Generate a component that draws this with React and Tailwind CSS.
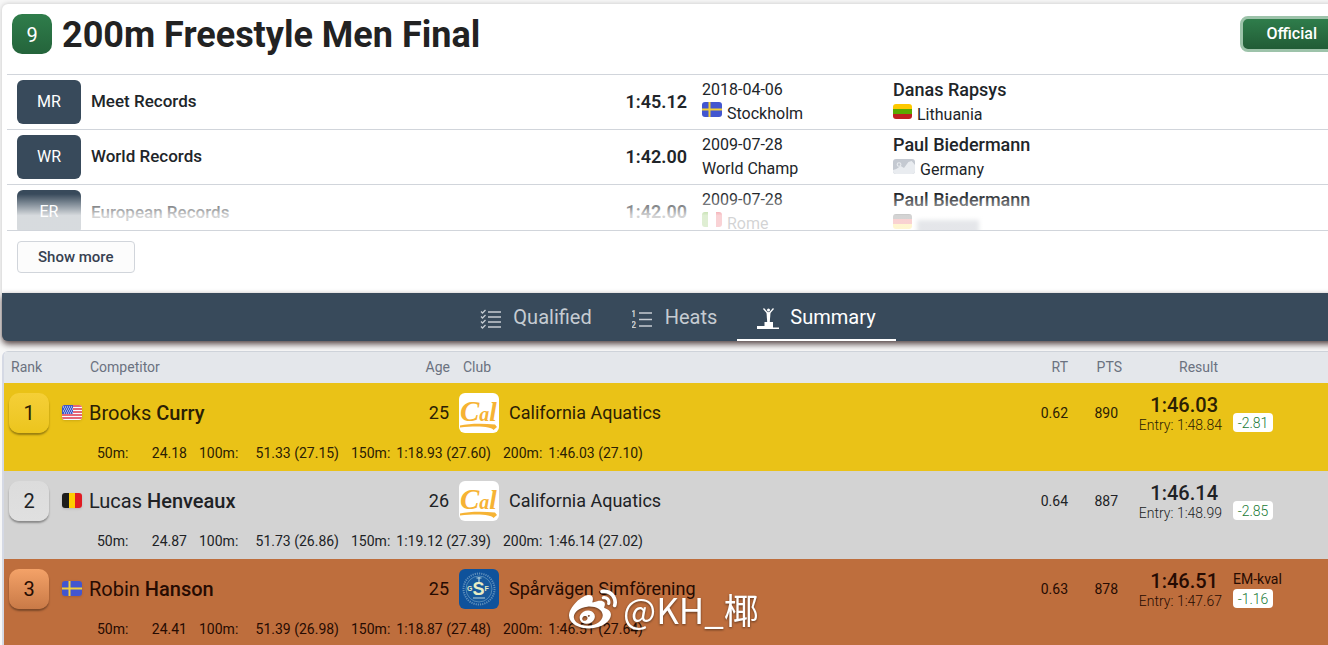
import { SiSinaweibo } from "react-icons/si"
import clsx from "clsx"

const records = [
  { code: "MR", name: "Meet Records", time: "1:45.12", date: "2018-04-06", flag: "se", place: "Stockholm", holder: "Danas Rapsys", countryFlag: "lt", country: "Lithuania" },
  { code: "WR", name: "World Records", time: "1:42.00", date: "2009-07-28", place: "World Champ", holder: "Paul Biedermann", countryFlag: "none", country: "Germany" },
  { code: "ER", name: "European Records", time: "1:42.00", date: "2009-07-28", flag: "it", place: "Rome", holder: "Paul Biedermann", countryFlag: "de", country: "" },
]

const results = [
  {
    rank: 1, flag: "us", first: "Brooks", last: "Curry", age: 25, logo: "cal", club: "California Aquatics",
    rt: "0.62", pts: 890, time: "1:46.03", entry: "1:48.84", diff: "-2.81",
    splits: [["50m:", "24.18"], ["100m:", "51.33 (27.15)"], ["150m:", "1:18.93 (27.60)"], ["200m:", "1:46.03 (27.10)"]],
    row: "bg-[#eac217] text-[#2b2004]",
    badge: "from-[#f5cf37] to-[#ecc51c]",
  },
  {
    rank: 2, flag: "be", first: "Lucas", last: "Henveaux", age: 26, logo: "cal", club: "California Aquatics",
    rt: "0.64", pts: 887, time: "1:46.14", entry: "1:48.99", diff: "-2.85",
    splits: [["50m:", "24.87"], ["100m:", "51.73 (26.86)"], ["150m:", "1:19.12 (27.39)"], ["200m:", "1:46.14 (27.02)"]],
    row: "bg-[#d3d3d3] text-[#202225]",
    badge: "from-[#dcdcdc] to-[#e0e0e0]",
  },
  {
    rank: 3, flag: "se", first: "Robin", last: "Hanson", age: 25, logo: "ssf", club: "Spårvägen Simförening",
    rt: "0.63", pts: 878, time: "1:46.51", entry: "1:47.67", diff: "-1.16", note: "EM-kval",
    splits: [["50m:", "24.41"], ["100m:", "51.39 (26.98)"], ["150m:", "1:18.87 (27.48)"], ["200m:", "1:46.51 (27.64)"]],
    row: "bg-[#be6e3d] text-[#260b02]",
    badge: "from-[#f4a268] to-[#c97a47]",
  },
]

function Flag({ code, className }) {
  return (
    <svg viewBox="0 0 20 15" preserveAspectRatio="none" className={clsx("h-[15px] shrink-0 rounded-[3px]", className)} aria-hidden="true">
      {code === "se" && (
        <>
          <rect width="20" height="15" fill="#4256d0" />
          <path d="M7.5 0v15M0 7.5h20" stroke="#f2cf3a" strokeWidth="2" />
        </>
      )}
      {code === "lt" && (
        <>
          <rect width="20" height="5" fill="#fdc800" />
          <rect y="5" width="20" height="5" fill="#5aaa00" />
          <rect y="10" width="20" height="5" fill="#bf2020" />
        </>
      )}
      {code === "it" && (
        <>
          <rect width="20" height="15" fill="#fff" />
          <rect width="6" height="15" fill="#5eaa22" />
          <rect x="14" width="6" height="15" fill="#e11e2e" />
        </>
      )}
      {code === "de" && (
        <>
          <rect width="20" height="5" fill="#272727" />
          <rect y="5" width="20" height="5" fill="#e31d1c" />
          <rect y="10" width="20" height="5" fill="#ffd018" />
        </>
      )}
      {code === "be" && (
        <>
          <rect width="7" height="15" fill="#1d1d1b" />
          <rect x="7" width="6" height="15" fill="#fecc00" />
          <rect x="13" width="7" height="15" fill="#e11b22" />
        </>
      )}
      {code === "us" && (
        <>
          <rect width="20" height="15" fill="#f7fcff" />
          <path d="M0 1h20M0 4h20M0 7h20M0 10h20M0 13h20" stroke="#e0364a" strokeWidth="1.5" />
          <rect width="11" height="9" fill="#3d58c8" />
          <path d="M1 2h10M2 4h9M1 6h10M2 8h9" stroke="#f7fcff" strokeWidth="1" strokeDasharray="1 1" />
        </>
      )}
      {code === "none" && (
        <>
          <rect width="20" height="15" fill="#c4c9d1" />
          <circle cx="5.5" cy="5.5" r="1.7" fill="none" stroke="#e8ebef" />
          <path d="M0 11l3-1 4-3 3 2 4-6 3-1 3 4v9H0z" fill="#e9ecf0" />
        </>
      )}
    </svg>
  )
}

function ClubLogo({ name }) {
  if (name === "cal") {
    return (
      <svg viewBox="0 0 40 40" className="size-10 shrink-0 rounded-md bg-white" aria-hidden="true">
        <text x="1" y="28" fontSize="29" fill="#f6b334" fontFamily="Liberation Serif, serif" fontStyle="italic" fontWeight="bold">
          C<tspan fontSize="20">a</tspan><tspan fontSize="27">l</tspan>
        </text>
        <path d="M1 32.500C10 30.500 24 30.500 36 31.500L38 34L34.500 37C33 33.500 18 32.500 1 34.500z" fill="#f6b334" />
      </svg>
    )
  }
  return (
    <svg viewBox="0 0 40 40" className="size-10 shrink-0 rounded-md bg-[#0f529b]" aria-hidden="true">
      <circle cx="20" cy="20" r="15.500" fill="none" stroke="#5f8fbb" strokeWidth="2" strokeDasharray="1.200 1" />
      <circle cx="20" cy="20" r="13" fill="#17599c" stroke="#6f9fc4" strokeWidth="0.700" />
      <path d="M20 8v6M17.500 9h5M14 29h12" stroke="#b8d2da" strokeWidth="1.200" />
      <text x="8" y="24" fill="#e9edc4" fontSize="7" fontFamily="Liberation Sans, sans-serif" fontWeight="bold">
        <tspan dy="-2">G</tspan><tspan dy="4" fontSize="18">S</tspan><tspan dy="-4">F</tspan>
      </text>
    </svg>
  )
}

function QualifiedIcon() {
  return (
    <svg viewBox="0 0 22 22" className="size-[22px]" fill="none" stroke="currentColor" aria-hidden="true">
      <path d="M8 4h13M8 9h13M8 14h13M8 19h13" strokeWidth="1.400" />
      <path d="M1 3.500l1.500 1.500 3-3M1 8.500l1.500 1.500 3-3M1 13.500l1.500 1.500 3-3M1 18.500l1.500 1.500 3-3" strokeWidth="1.300" />
    </svg>
  )
}

function HeatsIcon() {
  return (
    <svg viewBox="0 0 22 22" className="size-[22px]" fill="currentColor" aria-hidden="true">
      <path d="M7 5h13M7 11.500h13M7 18h13" stroke="currentColor" strokeWidth="1.400" />
      <text x="-1" y="9" fontSize="9" fontWeight="bold">1</text>
      <text x="-1" y="20" fontSize="9" fontWeight="bold">2</text>
    </svg>
  )
}

function PodiumIcon() {
  return (
    <svg viewBox="0 0 22 24" className="h-6 w-[22px]" fill="currentColor" aria-hidden="true">
      <circle cx="11.500" cy="3" r="1.500" />
      <path d="M6.500 1.500l4 4.500h2L16.500 1.500" fill="none" stroke="currentColor" strokeWidth="1.300" />
      <path d="M9.500 5.500h4L12.800 15h-2.600z" />
      <path d="M7.500 15H16v5.500h6V22H0v-3h7.500z" />
    </svg>
  )
}

const tabs = [
  { label: "Qualified", Icon: QualifiedIcon },
  { label: "Heats", Icon: HeatsIcon },
  { label: "Summary", Icon: PodiumIcon, active: true },
]

function EventHeader() {
  return (
    <header className="flex h-[70px] items-start justify-between px-[10px] pt-[10px]">
      <div className="flex items-start gap-[10px]">
        <span className="flex size-10 items-center justify-center rounded-[10px] bg-linear-to-b from-[#2f7d4b] to-[#24643b] pt-[2px] text-xl text-white">9</span>
        <h1 className="text-4xl leading-[42px] font-bold text-[#222]">200m Freestyle Men Final</h1>
      </div>
      <button className="mt-[2px] h-9 rounded-lg border-[3px] border-[#9dc3aa] bg-linear-to-b from-[#2f7d4b] to-[#215c36] px-6 font-medium text-white">
        Official
      </button>
    </header>
  )
}

function Records() {
  return (
    <section className="px-[5px]">
      <div className="relative h-[157px] overflow-hidden border-b border-[#d1d5db]">
        <table className="w-full table-fixed">
          <colgroup>
            <col className="w-[84px]" />
            <col />
            <col className="w-[120px]" />
            <col className="w-[191px]" />
            <col className="w-[461px]" />
          </colgroup>
          <tbody>
            {records.map((r) => (
              <tr key={r.code} className="h-[55px] border-t border-[#d1d5db]">
                <td className="pl-[10px]">
                  <span className="flex h-11 w-16 items-center justify-center rounded-md bg-[#384a5b] text-white">{r.code}</span>
                </td>
                <td className="text-[17px] font-medium">{r.name}</td>
                <td className="pr-[10px] text-right text-lg font-semibold">{r.time}</td>
                <td className="pl-[5px]">
                  <div>{r.date}</div>
                  <div className="flex items-start gap-[5px]">
                    {r.flag && <Flag code={r.flag} className="w-5" />}
                    {r.place}
                  </div>
                </td>
                <td className="pt-[2px] pl-[5px] align-top">
                  <div className="text-lg leading-[25px] font-medium">{r.holder}</div>
                  <div className="flex items-start gap-[5px] leading-[26px]">
                    <Flag code={r.countryFlag} className={clsx("mt-[2px]", r.countryFlag === "none" ? "w-[22px]" : "w-[19px]")} />
                    {r.country || <span className="mt-2 h-4 w-[62px] bg-[#7b8494] blur-[2px]" />}
                  </div>
                </td>
              </tr>
            ))}
          </tbody>
        </table>
        <div className="pointer-events-none absolute inset-x-0 bottom-0 h-9 bg-linear-to-b from-white/0 to-white/80 to-60%" />
      </div>
      <div className="flex h-[62px] items-start px-[10px] pt-[10px]">
        <button className="h-8 rounded border border-[#d1d5db] bg-[#fcfcfc] px-5 text-[15px] font-medium text-[#374151]">
          Show more
        </button>
      </div>
    </section>
  )
}

function Tabs() {
  return (
    <nav className="relative flex h-12 justify-center rounded-b-md bg-[#384a5b] shadow-[0_3px_6px_rgba(40,20,20,0.8)]">
      {tabs.map(({ label, Icon, active }) => (
        <button
          key={label}
          className={clsx(
            "flex items-center gap-[11px] border-b-2 px-5 pt-[2px] text-xl",
            active ? "border-white text-white" : "border-transparent text-[#c6ccd2]"
          )}
        >
          <span className="pt-1">
            <Icon />
          </span>
          {label}
        </button>
      ))}
    </nav>
  )
}

function ResultRow({ r }) {
  return (
    <>
      <tr className={clsx("h-[60px]", r.row)}>
        <td className="pl-[5px]">
          <span className={clsx("flex size-10 items-center justify-center rounded-[10px] bg-linear-to-b text-xl shadow-[0_2px_2px_rgba(0,0,0,0.35)]", r.badge)}>
            {r.rank}
          </span>
        </td>
        <td>
          <div className="flex items-center gap-[7px] pl-[6px] text-xl">
            <Flag code={r.flag} className="w-5 shadow" />
            <span>
              {r.first} <span className="font-medium">{r.last}</span>
            </span>
          </div>
        </td>
        <td className="pr-[5px] text-right text-lg">{r.age}</td>
        <td>
          <div className="flex items-center gap-[10px] pl-[5px] text-lg">
            <ClubLogo name={r.logo} />
            {r.club}
          </div>
        </td>
        <td className="pr-1 text-right text-sm">{r.rt}</td>
        <td className="pr-1 text-right text-sm">{r.pts}</td>
        <td className="pt-1 pr-1 text-right">
          <div className="pr-1 text-xl leading-5 font-medium">{r.time}</div>
          <div className="text-sm font-light">Entry: {r.entry}</div>
        </td>
        <td className="pl-[7px] text-sm">
          <div className="h-5">{r.note}</div>
          <span className="flex h-[19px] w-10 items-center justify-center rounded bg-white font-light text-[#217a35]">{r.diff}</span>
        </td>
      </tr>
      <tr className={clsx("h-7", r.row)}>
        <td colSpan={8} className="pb-2">
          <div className="flex gap-3 pl-[93px] text-sm">
            {r.splits.map(([dist, time], i) => (
              <span key={dist} className={clsx("flex justify-between", i === 0 ? "w-[90px]" : "w-[140px]")}>
                <span>{dist}</span>
                <span>{time}</span>
              </span>
            ))}
          </div>
        </td>
      </tr>
    </>
  )
}

function Results() {
  return (
    <section className="relative mt-[10px] overflow-hidden rounded-tl-md border-l-2 border-[#d5d9e4]">
      <table className="w-full table-fixed">
        <colgroup>
          <col className="w-[52px]" />
          <col className="w-[346px]" />
          <col className="w-[52px]" />
          <col />
          <col className="w-[60px]" />
          <col className="w-[50px]" />
          <col className="w-[104px]" />
          <col className="w-32" />
        </colgroup>
        <thead>
          <tr className="h-[31px] border-t border-[#ced3da] bg-[#e4e7eb] text-left text-sm text-[#6b7280]">
            <th className="pl-[7px] font-normal">Rank</th>
            <th className="pl-[34px] font-normal">Competitor</th>
            <th className="pr-1 text-right font-normal">Age</th>
            <th className="pl-[9px] font-normal">Club</th>
            <th className="pr-1 text-right font-normal">RT</th>
            <th className="text-right font-normal">PTS</th>
            <th className="pr-2 text-right font-normal">Result</th>
            <th />
          </tr>
        </thead>
        <tbody>
          {results.map((r) => (
            <ResultRow key={r.rank} r={r} />
          ))}
        </tbody>
      </table>
    </section>
  )
}

export default function App() {
  return (
    <div className="relative h-screen overflow-hidden bg-[#f7f7f7] font-[Roboto,sans-serif] text-[#212529]">
      {/* the sheet runs a little past the right edge of the window */}
      <div className="mt-1 -mr-[26px] ml-[2px]">
        <div className="rounded-t-md bg-white shadow-[0_0_5px_rgba(0,0,0,0.2)]">
          <EventHeader />
          <Records />
        </div>
        <Tabs />
        <Results />
      </div>

      <div className="absolute inset-x-0 bottom-3 flex items-center justify-center gap-[6px] font-['Noto_Sans_CJK_SC',sans-serif] text-[35px] leading-[42px] text-white drop-shadow-[0_1px_1px_rgba(0,0,0,0.5)]">
        <SiSinaweibo className="size-12" />
        <span>@KH_椰</span>
      </div>
    </div>
  )
}
